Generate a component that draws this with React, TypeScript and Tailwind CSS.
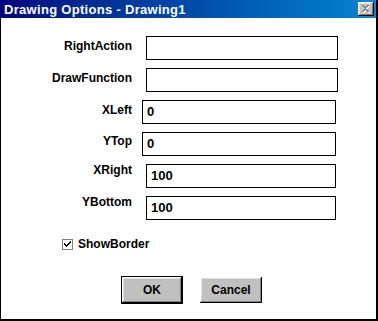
const font = { fontFamily: '"Liberation Sans", Arial, sans-serif' };

type Row = { label: string; value: string; labelTop: string; boxClass: string };

const rows: Row[] = [
  { label: "RightAction", value: "", labelTop: "mt-[4px]", boxClass: "ml-[14px] w-[192px]" },
  { label: "DrawFunction", value: "", labelTop: "mt-[4px]", boxClass: "ml-[14px] w-[192px]" },
  { label: "XLeft", value: "0", labelTop: "mt-[4px]", boxClass: "ml-[10px] w-[194px]" },
  { label: "YTop", value: "0", labelTop: "mt-[3px]", boxClass: "ml-[10px] w-[194px]" },
  { label: "XRight", value: "100", labelTop: "mt-[0px]", boxClass: "ml-[14px] w-[190px]" },
  { label: "YBottom", value: "100", labelTop: "mt-[0px]", boxClass: "ml-[14px] w-[190px]" },
];

function CloseButton() {
  return (
    <div className="w-[16px] h-[14px] bg-[#c0c0c0] flex items-center justify-center shadow-[inset_-1px_-1px_0_#000,inset_1px_1px_0_#fff,inset_-2px_-2px_0_#808080,inset_2px_2px_0_#dfdfdf]">
      <svg width="9" height="8" viewBox="0 0 9 8" shapeRendering="crispEdges">
        <path d="M1 1h2v1h1v1h1v-1h1v-1h2v1h-1v1h-1v1h-1v1h1v1h1v1h1v1h-2v-1h-1v-1h-1v1h-1v1h-2v-1h1v-1h1v-1h1v-1h-1v-1h-1v-1h-1z" fill="#fff" />
        <path d="M0 0h2v1h1v1h1v-1h1v-1h2v1h-1v1h-1v1h-1v1h1v1h1v1h1v1h-2v-1h-1v-1h-1v1h-1v1h-2v-1h1v-1h1v-1h1v-1h-1v-1h-1v-1h-1z" fill="#808080" />
      </svg>
    </div>
  );
}

function Button({ label, isDefault }: { label: string; isDefault?: boolean }) {
  return (
    <div
      className={
        "h-[26px] bg-[#c0c0c0] flex items-center justify-center text-[12px] font-bold text-black shadow-[inset_-1px_-1px_0_#000,inset_1px_1px_0_#fff,inset_-2px_-2px_0_#808080,inset_2px_2px_0_#dfdfdf] " +
        (isDefault ? "w-[60px] outline outline-1 outline-black" : "w-[62px]")
      }
    >
      {label}
    </div>
  );
}

export default function App() {
  return (
    <div className="w-[378px] h-[321px] flex flex-col bg-white border-l border-r-2 border-b-2 border-black" style={font}>
      <div className="h-[18px] -ml-px flex items-center justify-between pl-[4px] pr-[2px] bg-linear-to-r from-[#000080] to-[#1084d0]">
        <span className="text-white text-[13px] tracking-[0.3px] font-bold leading-none">Drawing Options - Drawing1</span>
        <CloseButton />
      </div>

      <div className="flex flex-col gap-[8px] pt-[18px]">
        {rows.map((r) => (
          <div key={r.label} className="flex items-start h-[24px]">
            <div className={"w-[131px] text-right text-[12px] leading-[12px] font-bold text-black " + r.labelTop}>
              {r.label}
            </div>
            <div className={"h-[24px] border border-black flex items-center pl-[4px] text-[13px] font-bold text-black " + r.boxClass}>
              {r.value}
            </div>
          </div>
        ))}
      </div>

      <div className="flex items-center gap-[5px] ml-[61px] mt-[18px]">
        <div className="w-[11px] h-[11px] bg-white border border-[#808080] flex items-center justify-center">
          <svg width="7" height="7" viewBox="0 0 7 7" shapeRendering="crispEdges">
            <path d="M0 2h1v1h1v1h1v-1h1v-1h1v-1h1v-1h1v2h-1v1h-1v1h-1v1h-1v1h-1v-1h-1v-1h-1z" fill="#000" />
          </svg>
        </div>
        <span className="text-[12px] font-bold text-black leading-[12px]">ShowBorder</span>
      </div>

      <div className="flex gap-[18px] mt-[27px] ml-[121px]">
        <Button label="OK" isDefault />
        <Button label="Cancel" />
      </div>
    </div>
  );
}
